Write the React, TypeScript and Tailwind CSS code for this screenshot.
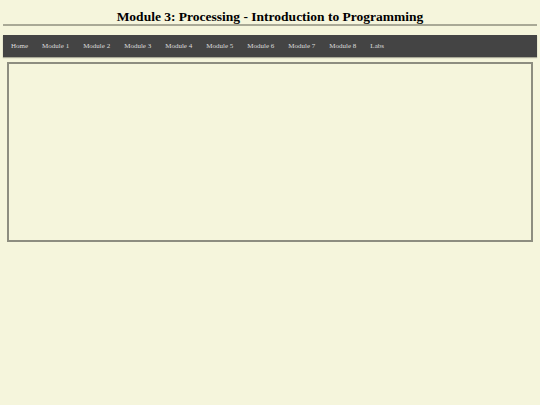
const links = ['Home', 'Module 1', 'Module 2', 'Module 3', 'Module 4', 'Module 5', 'Module 6', 'Module 7', 'Module 8', 'Labs'];

export default function App() {
  return (
    <div className="min-h-[405px] bg-[#f5f5dc] px-[3px] pt-[9px]" style={{ fontFamily: '"Liberation Serif", "Times New Roman", serif' }}>
      <h1 className="text-center text-[13.5px] font-bold leading-[15px] text-black">
        Module 3: Processing - Introduction to Programming
      </h1>
      <div className="h-[2px] bg-[#a9a996]" />
      <nav className="mt-[9px] flex h-[22px] items-center bg-[#444444] px-[8px] shadow-[0_1px_1px_rgba(0,0,0,0.3)]">
        <ul className="flex items-center gap-[14px]">
          {links.map((l) => (
            <li key={l} className="text-[7px] leading-none text-[#dddddd]">
              {l}
            </li>
          ))}
        </ul>
      </nav>
      <main className="mx-[4px] mt-[5px] h-[180px] border-2 border-[#8d8d80] bg-[#f5f5dc]" />
    </div>
  );
}
